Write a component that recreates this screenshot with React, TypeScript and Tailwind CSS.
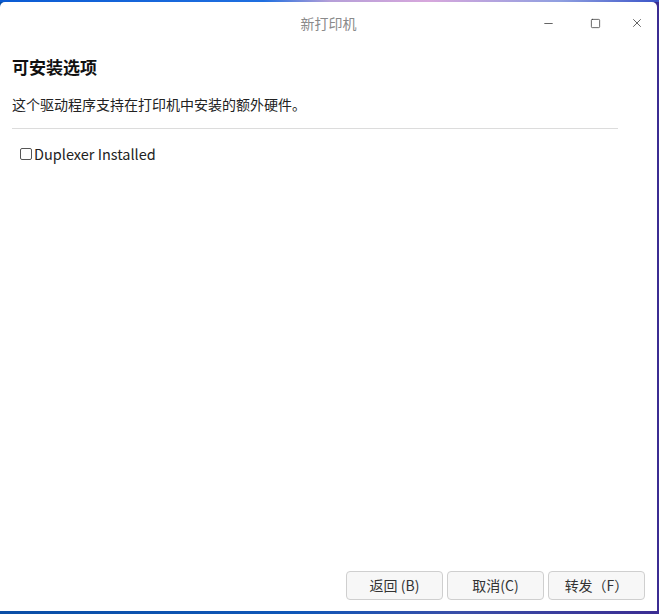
import { Minus, Square, X } from 'lucide-react'

export default function App() {
  return (
    <div className="w-[659px] h-[614px] flex flex-col relative bg-[linear-gradient(90deg,#0a4ea6_0%,#0f57b8_45%,#3a4ea8_70%,#3b2c92_100%)] font-['Noto_Sans_CJK_SC','Noto_Sans',sans-serif]">
      <div className="h-[2px] bg-[linear-gradient(90deg,#0b5bd3_0%,#1f6fe0_40%,#b59fd8_50%,#d7a7dc_65%,#8f9fe0_85%,#3a54c8_100%)]" />
      <div className="mr-[2px] mb-[3px] flex-1 flex flex-col bg-white rounded-t-[5px]">
        <div className="h-[42px] flex items-center relative">
          <div className="absolute inset-0 flex items-center justify-center text-[14px] text-[#8a8a8a]">新打印机</div>
          <div className="ml-auto flex items-center relative">
            <button className="w-[50px] h-[42px] flex items-center justify-center text-[#333]">
              <Minus size={13} strokeWidth={1.4} />
            </button>
            <button className="w-[44px] h-[42px] flex items-center justify-center text-[#333]">
              <Square size={11} strokeWidth={1.6} />
            </button>
            <button className="w-[40px] h-[42px] flex items-center justify-center text-[#333]">
              <X size={14} strokeWidth={1.3} />
            </button>
          </div>
        </div>

        <div className="px-3 flex-1 flex flex-col">
          <h1 className="mt-[12px] text-[17px] font-bold text-[#111] leading-[22px]">可安装选项</h1>
          <p className="mt-[17px] text-[14px] text-[#222] leading-[18px]">这个驱动程序支持在打印机中安装的额外硬件。</p>
          <div className="mt-[15px] mr-[27px] border-t border-[#dcdcdc]" />
          <label className="mt-[15px] ml-[8px] flex items-center text-[14.5px] text-[#222] leading-[20px]">
            <span className="w-[12px] h-[12px] border border-[#555] rounded-[2px] mr-[2px] bg-white" />
            Duplexer Installed
          </label>
          <div className="flex-1" />
          <div className="flex justify-end gap-[4px] mb-[11px]">
            <button className="w-[97px] h-[29px] border border-[#cfcfcf] rounded-[4px] bg-[#f7f7f7] text-[14px] text-[#333]">返回 (B)</button>
            <button className="w-[97px] h-[29px] border border-[#cfcfcf] rounded-[4px] bg-[#f7f7f7] text-[14px] text-[#333]">取消(C)</button>
            <button className="w-[97px] h-[29px] border border-[#cfcfcf] rounded-[4px] bg-[#f7f7f7] text-[14px] text-[#333]">转发（F）</button>
          </div>
        </div>
      </div>
    </div>
  )
}
